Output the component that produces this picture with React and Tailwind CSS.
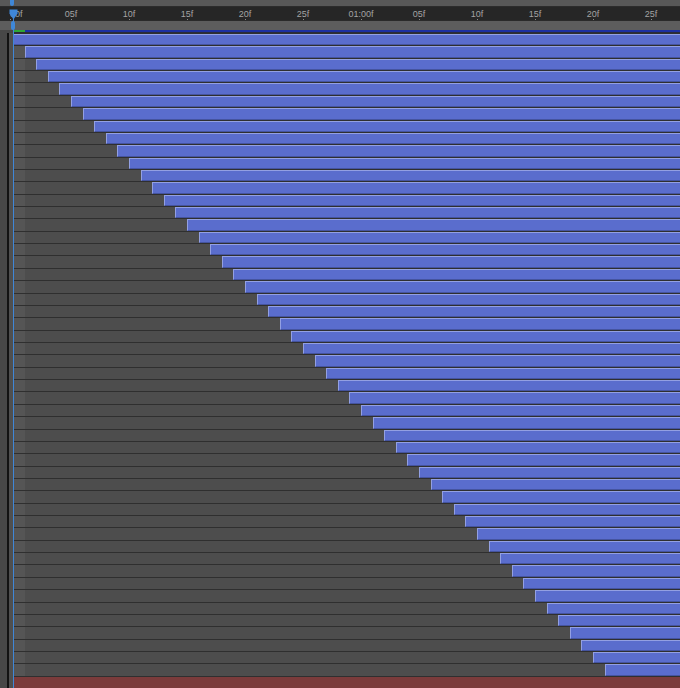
import React from "react";

const labels = ["00f", "05f", "10f", "15f", "20f", "25f", "01:00f", "05f", "10f", "15f", "20f", "25f"];
const ROWS = 52;
const FRAME = 11.6;

function Ruler() {
  return (
    <div className="h-[13px] bg-[#262626] overflow-hidden">
      <div className="flex ml-[-16px]">
        {labels.map((l, i) => (
          <div
            key={i}
            className={
              i === 0
                ? "w-[58px] shrink-0 flex flex-col items-start pl-[26px]"
                : "w-[58px] shrink-0 flex flex-col items-center"
            }
          >
            <span className="text-[9px] leading-[10px] mt-[2px] text-[#a3a3a3]">{l}</span>
            <span className="w-px h-[2px] bg-[#8a8a8a]" />
          </div>
        ))}
      </div>
    </div>
  );
}

function Track({ index }) {
  return (
    <div className="flex-1 min-h-0 flex flex-col bg-[linear-gradient(to_right,#555555_12px,#4d4d4d_12px)]">
      <div className="h-px shrink-0 bg-[#2f2f2f]" />
      <div className="flex-1 min-h-0 flex">
        <div
          className="flex-1 bg-[#5a6dcd] border-t border-l border-[#93a0e2] border-b border-b-[#45549f]"
          style={{ marginLeft: index * FRAME }}
        />
      </div>
    </div>
  );
}

export default function App() {
  return (
    <div className="relative w-[680px] h-[688px] overflow-hidden bg-[#4d4d4d] font-['Liberation_Sans',Arial,sans-serif]">
      {/* top strip */}
      <div className="h-[7px] bg-[#585858] border-b border-[#2c2c2c]" />
      <Ruler />
      <div className="h-[10px] bg-[#5d5d5d] border-t border-[#2a2a2a]" />
      {/* work area bar */}
      <div className="flex">
        <div className="w-[13px] h-[3px] bg-[#474747]" />
        <div className="flex-1 h-[3px] flex flex-col">
          <div className="h-[2px] flex">
            <div className="w-[12px] bg-[#2ea836]" />
            <div className="flex-1 bg-[#1c2ea0]" />
          </div>
          <div className="h-px bg-[#2a2a3a]" />
        </div>
      </div>
      {/* body */}
      <div className="flex h-[655px]">
        <div className="w-[13px] flex shrink-0">
          <div className="w-[7px] bg-[#474747]" />
          <div className="w-[2px] bg-[#121212]" />
          <div className="flex-1 bg-[#4f4f4f]" />
        </div>
        <div className="flex-1 flex flex-col">
          <div className="h-[643px] flex flex-col">
            {Array.from({ length: ROWS }).map((_, i) => (
              <Track key={i} index={i} />
            ))}
          </div>
          <div className="flex-1 flex flex-col">
            <div className="h-px bg-[#2f2f2f]" />
            <div className="flex-1 bg-[#7b3b3b]" />
          </div>
        </div>
      </div>

      {/* playhead */}
      <div className="absolute left-[13px] top-[18px] w-px h-[670px] bg-[#3f87d8]" />
      <div className="absolute left-[10px] top-0 w-[4px] h-[6px] rounded-b-sm bg-[#3f87d8]" />
      <svg className="absolute left-[9px] top-[9px]" width="9" height="11" viewBox="0 0 9 11">
        <polygon points="0.5,0.5 8.5,0.5 8.5,4.5 4.5,10.5 0.5,4.5" fill="#3f87d8" />
      </svg>
      <div className="absolute left-[11px] top-[21px] w-[4px] h-[9px] rounded-sm bg-[#3f87d8]" />
    </div>
  );
}
